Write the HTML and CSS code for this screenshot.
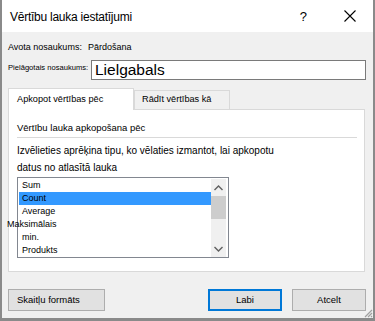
FILE: index.html
```html
<!DOCTYPE html>
<html>
<head>
<meta charset="utf-8">
<link rel="stylesheet" href="styles.css">
</head>
<body>
<div class="window">
  <div class="titlebar">
    <span class="title">Vērtību lauka iestatījumi</span>
    <span class="help">?</span>
    <svg class="close" width="12" height="12" viewBox="0 0 12 12"><path d="M0.5 0.5L11.5 11.5M11.5 0.5L0.5 11.5" stroke="#000" stroke-width="1.1" fill="none"/></svg>
  </div>
  <div class="body">
    <div class="source"><span>Avota nosaukums:</span><span class="srcval">Pārdošana</span></div>
    <div class="namerow">
      <span class="namelabel">Pielāgotais nosaukums:</span>
      <div class="nameinput">Lielgabals</div>
    </div>
    <div class="tabs">
      <div class="tab active">Apkopot vērtības pēc</div>
      <div class="tab">Rādīt vērtības kā</div>
    </div>
    <div class="panel">
      <div class="heading">Vērtību lauka apkopošana pēc</div>
      <div class="desc">Izvēlieties aprēķina tipu, ko vēlaties izmantot, lai apkopotu<br>datus no atlasītā lauka</div>
      <div class="listbox">
        <div class="items">
          <div class="item">Sum</div>
          <div class="item sel">Count</div>
          <div class="item">Average</div>
          <div class="item out">Maksimālais</div>
          <div class="item">min.</div>
          <div class="item">Produkts</div>
        </div>
        <div class="scrollbar">
          <svg class="arrow" width="9" height="6" viewBox="0 0 9 6"><path d="M0.5 5L4.5 1L8.5 5" stroke="#606060" stroke-width="1.4" fill="none"/></svg>
          <div class="thumb"></div>
          <div class="track"></div>
          <svg class="arrow" width="9" height="6" viewBox="0 0 9 6"><path d="M0.5 1L4.5 5L8.5 1" stroke="#606060" stroke-width="1.4" fill="none"/></svg>
        </div>
      </div>
    </div>
    <div class="buttons">
      <div class="btn fmt">Skaitļu formāts</div>
      <div class="spacer"></div>
      <div class="btn ok">Labi</div>
      <div class="btn cancel">Atcelt</div>
    </div>
    <svg class="grip" width="10" height="10" viewBox="0 0 10 10"><path d="M9 2L2 9M9 5L5 9M9 8L8 9" stroke="#a0a0a0" stroke-width="1.2" fill="none"/></svg>
  </div>
</div>
</body>
</html>
```
FILE: styles.css
```css
html, body {
  margin: 0;
  padding: 0;
  background: #888;
}
body {
  font-family: "Liberation Sans", Arial, sans-serif;
  font-size: 12px;
  color: #000;
}
.window {
  width: 375px;
  height: 321px;
  box-sizing: border-box;
  border-style: solid;
  border-color: #8a8a8a;
  border-width: 0 2px 3px 2px;
  display: flex;
  flex-direction: column;
  background: #f0f0f0;
}
.titlebar {
  height: 32px;
  background: #fff;
  display: flex;
  align-items: center;
  flex-shrink: 0;
}
.title {
  margin-left: 8px;
  font-size: 12px;
  letter-spacing: -0.25px;
  flex: 1;
  padding-top: 1px;
}
.help {
  font-size: 13px;
  margin-right: 37px;
}
.close {
  margin-right: 17px;
}
.body {
  flex: 1;
  display: flex;
  flex-direction: column;
  padding: 0 7px 0 6px;
  position: relative;
}
.source {
  margin-top: 7px;
  height: 16px;
  line-height: 16px;
  font-size: 9px;
}
.srcval {
  margin-left: 6px;
}
.namerow {
  margin-top: 5px;
  display: flex;
  align-items: center;
  height: 20px;
}
.namelabel {
  font-size: 7.6px;
  width: 83px;
  margin-top: -6px;
  white-space: nowrap;
}
.nameinput {
  flex: 1;
  height: 20px;
  box-sizing: border-box;
  border: 1px solid #7a7a7a;
  background: #fff;
  font-size: 15.5px;
  line-height: 18px;
  padding-left: 3px;
}
.tabs {
  margin-top: 8px;
  display: flex;
  align-items: flex-end;
  height: 21px;
  position: relative;
  z-index: 1;
}
.tab {
  height: 19px;
  box-sizing: border-box;
  border: 1px solid #d9d9d9;
  border-bottom: none;
  background: #f0f0f0;
  padding: 3px 0 0 7px;
  width: 96px;
  font-size: 9.2px;
}
.tab.active {
  height: 22px;
  width: 126px;
  background: #fff;
  padding: 5px 0 0 8px;
  margin-bottom: -1px;
}
.panel {
  height: 163px;
  width: 357px;
  box-sizing: border-box;
  border: 1px solid #d9d9d9;
  background: #fff;
  padding: 10px 7px 0 8px;
}
.heading {
  height: 17px;
  line-height: 16px;
  font-size: 9.5px;
  border-bottom: 1px solid #d9d9d9;
}
.desc {
  margin-top: 4px;
  line-height: 17px;
  font-size: 10px;
}
.listbox {
  margin-top: 1px;
  width: 212px;
  height: 81px;
  box-sizing: border-box;
  border: 1px solid #828790;
  display: flex;
  padding: 1px 2px 0 1px;
}
.items {
  flex: 1;
}
.item {
  height: 13px;
  line-height: 13px;
  font-size: 9px;
  padding-left: 3px;
}
.item.sel {
  background: #3399ff;
}
.item.out {
  margin-left: -15px;
}
.scrollbar {
  width: 15px;
  background: #f0f0f0;
  display: flex;
  flex-direction: column;
  align-items: center;
}
.arrow {
  margin-top: 6px;
  margin-bottom: 5px;
  flex-shrink: 0;
}
.scrollbar .arrow:last-child {
  margin-top: 0;
  margin-bottom: 5px;
}
.thumb {
  width: 15px;
  height: 23px;
  background: #cdcdcd;
}
.track {
  flex: 1;
}
.buttons {
  margin-top: 17px;
  display: flex;
  height: 22px;
}
.btn {
  box-sizing: border-box;
  height: 22px;
  border: 1px solid #adadad;
  background: #e1e1e1;
  line-height: 20px;
  font-size: 9.5px;
  text-align: center;
}
.fmt {
  width: 97px;
  text-align: left;
  padding-left: 8px;
}
.spacer {
  flex: 1;
}
.ok {
  width: 74px;
  border: 2px solid #0078d7;
  line-height: 18px;
  margin-right: 10px;
}
.cancel {
  width: 74px;
}
.grip {
  position: absolute;
  right: 0;
  bottom: 0;
}
```
